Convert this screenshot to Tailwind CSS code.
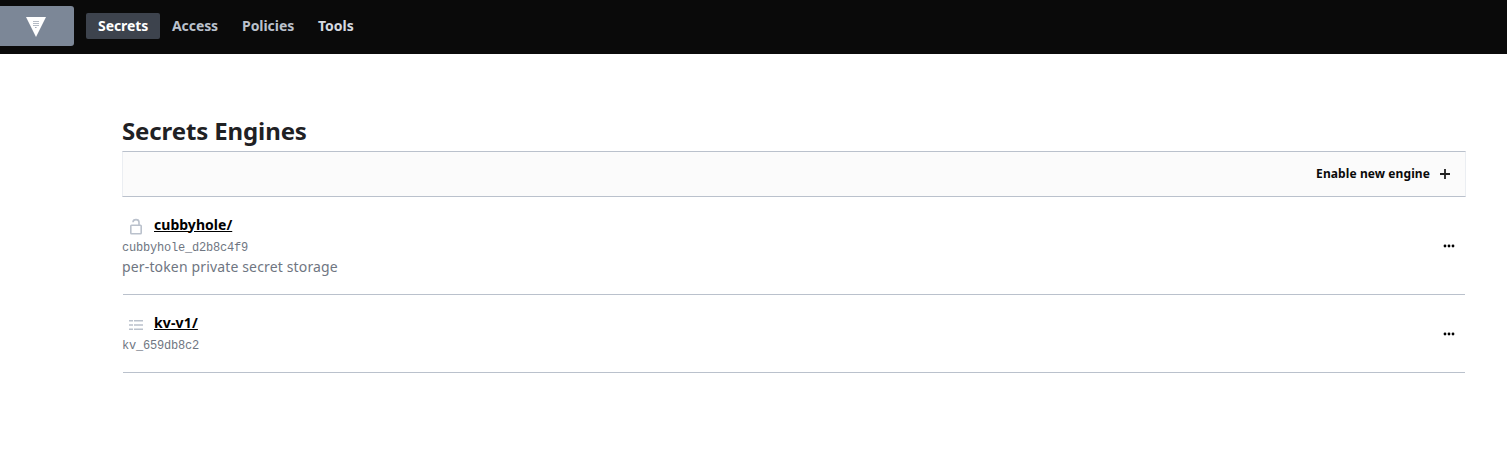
<!DOCTYPE html>
<html lang="en">
<head>
<meta charset="utf-8">
<title>Vault</title>
<script src="https://cdn.jsdelivr.net/npm/@tailwindcss/browser@4"></script>
</head>
<body class="bg-white font-['Noto_Sans',sans-serif] text-sm">
<header class="flex h-[54px] bg-[#0a0a0a] pt-1.5 font-bold leading-[26px] text-[#bac1cc]">
  <a class="flex h-10 w-[74px] items-center rounded-r-[3px] bg-[#7c8797] pl-[26px]">
    <svg class="mt-0.5" width="20" height="20" viewBox="0 0 20 20"><path d="M0 0h20L10 20z" fill="#fff"/><path d="M7.2 4.5h5.6M7.2 6.5h5.6M7.2 8.5h5.6M9 10.5h2" stroke="#a4acb8" stroke-width="1" stroke-dasharray="1.6 .4"/></svg>
  </a>
  <nav class="ml-3 mt-[7px] flex h-[26px]">
    <a class="w-[74px] rounded-[2px] bg-[#3d434d] px-3 tracking-[-0.06px] text-white">Secrets</a>
    <a class="w-[70px] px-3 tracking-[-0.08px]">Access</a>
    <a class="w-[76px] px-3 tracking-[-0.05px]">Policies</a>
    <a class="px-3 text-[#d5d9e0]">Tools</a>
  </nav>
</header>
<main class="ml-[122px] mr-[41px] pt-[62px]">
  <h1 class="h-[35px] text-2xl font-bold leading-[30px] tracking-[-0.12px] text-[#1f2124]">Secrets Engines</h1>
  <div class="flex h-[46px] items-center justify-end border border-x-[#ebeef2] border-y-[#bac1cc] bg-[#fbfbfb] pr-[15px] text-xs font-bold text-[#0a0a0a]">
    <span class="-mt-px tracking-[0.09px]">Enable new engine</span>
    <svg class="ml-2.5" width="10" height="10" viewBox="0 0 10 10"><path d="M0 5h10M5 0v10" stroke="#222" stroke-width="1.8"/></svg>
  </div>
  <section class="ml-px mr-px flex h-[98px] items-center justify-between border-b border-[#bac1cc] pr-[10px]">
    <div class="-ml-px h-[62px]">
      <div class="flex h-5">
        <svg class="ml-1.5 mt-px" width="16" height="20" viewBox="0 0 16 20" fill="none" stroke="#bac1cc" stroke-width="1.6"><rect x="2.8" y="9.3" width="10.4" height="8.4" rx=".8"/><path d="M5 6.2a3 2.6 0 0 1 6 0V9"/></svg>
        <a class="ml-2.5 font-bold leading-5 tracking-[0.03px] text-black underline">cubbyhole/</a>
      </div>
      <div class="h-[22px] font-['Liberation_Mono',monospace] text-[12px] leading-[26px] tracking-[-0.2px] text-[#6f7682]">cubbyhole_d2b8c4f9</div>
      <div class="leading-5 tracking-[0.15px] text-[#6f7682]">per-token private secret storage</div>
    </div>
    <svg class="mt-px" width="12" height="4" viewBox="0 0 12 4"><circle cx="2" cy="2" r="1.4"/><circle cx="6" cy="2" r="1.4"/><circle cx="10" cy="2" r="1.4"/></svg>
  </section>
  <section class="ml-px mr-px flex h-[78px] items-center justify-between border-b border-[#bac1cc] pr-[10px]">
    <div class="-ml-px h-[42px]">
      <div class="flex h-5">
        <svg class="ml-1.5 mt-px" width="16" height="20" viewBox="0 0 16 20" fill="none" stroke="#bac1cc" stroke-width="1.5"><path d="M1 6.75h4M6 6.75h9M1 11h4M6 11h9M1 15.25h4M6 15.25h9"/></svg>
        <a class="ml-2.5 font-bold leading-5 tracking-[0.15px] text-black underline">kv-v1/</a>
      </div>
      <div class="h-[22px] font-['Liberation_Mono',monospace] text-[12px] leading-[26px] tracking-[-0.2px] text-[#6f7682]">kv_659db8c2</div>
    </div>
    <svg class="mt-px" width="12" height="4" viewBox="0 0 12 4"><circle cx="2" cy="2" r="1.4"/><circle cx="6" cy="2" r="1.4"/><circle cx="10" cy="2" r="1.4"/></svg>
  </section>
</main>
</body>
</html>
